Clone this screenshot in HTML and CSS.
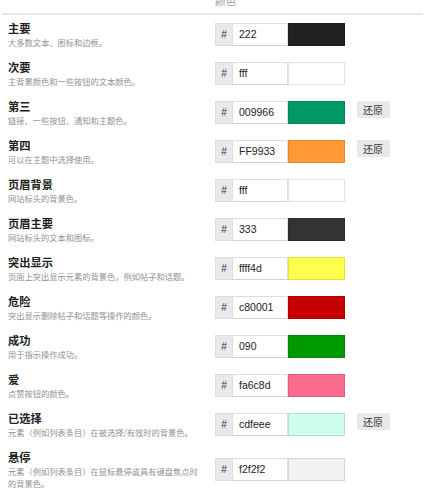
FILE: index.html
```html
<!DOCTYPE html>
<html lang="zh-CN">
<head>
<meta charset="utf-8">
<link rel="stylesheet" href="styles.css">
</head>
<body>
<div class="page">
  <div class="head"><span class="head-label">颜色</span></div>
  <div class="rows">
    <div class="row">
      <div class="info"><div class="name">主要</div><div class="desc">大多数文本、图标和边框。</div></div>
      <div class="ctrl"><span class="hash">#</span><span class="hex">222</span><span class="swatch" style="background:#222222"></span></div>
    </div>
    <div class="row">
      <div class="info"><div class="name">次要</div><div class="desc">主背景颜色和一些按钮的文本颜色。</div></div>
      <div class="ctrl"><span class="hash">#</span><span class="hex">fff</span><span class="swatch" style="background:#ffffff"></span></div>
    </div>
    <div class="row">
      <div class="info"><div class="name">第三</div><div class="desc">链接、一些按钮、通知和主题色。</div></div>
      <div class="ctrl"><span class="hash">#</span><span class="hex">009966</span><span class="swatch" style="background:#009966"></span><button class="revert">还原</button></div>
    </div>
    <div class="row">
      <div class="info"><div class="name">第四</div><div class="desc">可以在主题中选择使用。</div></div>
      <div class="ctrl"><span class="hash">#</span><span class="hex">FF9933</span><span class="swatch" style="background:#FF9933"></span><button class="revert">还原</button></div>
    </div>
    <div class="row">
      <div class="info"><div class="name">页眉背景</div><div class="desc">网站标头的背景色。</div></div>
      <div class="ctrl"><span class="hash">#</span><span class="hex">fff</span><span class="swatch" style="background:#ffffff"></span></div>
    </div>
    <div class="row">
      <div class="info"><div class="name">页眉主要</div><div class="desc">网站标头的文本和图标。</div></div>
      <div class="ctrl"><span class="hash">#</span><span class="hex">333</span><span class="swatch" style="background:#333333"></span></div>
    </div>
    <div class="row">
      <div class="info"><div class="name">突出显示</div><div class="desc">页面上突出显示元素的背景色，例如帖子和话题。</div></div>
      <div class="ctrl"><span class="hash">#</span><span class="hex">ffff4d</span><span class="swatch" style="background:#ffff4d"></span></div>
    </div>
    <div class="row">
      <div class="info"><div class="name">危险</div><div class="desc">突出显示删除帖子和话题等操作的颜色。</div></div>
      <div class="ctrl"><span class="hash">#</span><span class="hex">c80001</span><span class="swatch" style="background:#c80001"></span></div>
    </div>
    <div class="row">
      <div class="info"><div class="name">成功</div><div class="desc">用于指示操作成功。</div></div>
      <div class="ctrl"><span class="hash">#</span><span class="hex">090</span><span class="swatch" style="background:#009900"></span></div>
    </div>
    <div class="row">
      <div class="info"><div class="name">爱</div><div class="desc">点赞按钮的颜色。</div></div>
      <div class="ctrl"><span class="hash">#</span><span class="hex">fa6c8d</span><span class="swatch" style="background:#fa6c8d"></span></div>
    </div>
    <div class="row">
      <div class="info"><div class="name">已选择</div><div class="desc">元素（例如列表条目）在被选择/有效时的背景色。</div></div>
      <div class="ctrl"><span class="hash">#</span><span class="hex">cdfeee</span><span class="swatch" style="background:#cdfeee"></span><button class="revert">还原</button></div>
    </div>
    <div class="row">
      <div class="info"><div class="name">悬停</div><div class="desc">元素（例如列表条目）在鼠标悬停或具有键盘焦点时的背景色。</div></div>
      <div class="ctrl"><span class="hash">#</span><span class="hex">f2f2f2</span><span class="swatch" style="background:#f2f2f2"></span></div>
    </div>
  </div>
</div>
</body>
</html>
```

FILE: styles.css
```css
html, body {
  margin: 0;
  padding: 0;
  background: #ffffff;
}

body {
  font-family: "Noto Sans CJK SC", "Noto Sans", sans-serif;
  color: #222222;
}

.page {
  width: 425px;
}

.head {
  height: 7px;
  padding: 0 0 6px 213px;
  margin: 0 2px;
  border-bottom: 2px solid #e9e9e9;
  display: flex;
  align-items: flex-end;
}

.head-label {
  font-size: 10.5px;
  line-height: 13px;
  color: #9a9a9a;
  white-space: nowrap;
}

.rows {
  display: flex;
  flex-direction: column;
}

.row {
  display: flex;
  align-items: center;
  padding: 5.85px 0;
}

.info {
  width: 190px;
  padding-left: 8px;
  box-sizing: content-box;
  margin-right: 17px;
}

.name {
  font-size: 11.25px;
  line-height: 14px;
  font-weight: 700;
  color: #222222;
}

.desc {
  margin-top: 1.3px;
  font-size: 8.25px;
  line-height: 12px;
  color: #919191;
}

.ctrl {
  display: flex;
  align-items: flex-start;
}

.hash {
  box-sizing: border-box;
  width: 17px;
  height: 23px;
  background: #e9e9e9;
  border: 1px solid #dddddd;
  border-right: none;
  font-family: "Liberation Sans", Arial, sans-serif;
  font-size: 10px;
  line-height: 21px;
  text-align: center;
  color: #333333;
}

.hex {
  box-sizing: border-box;
  width: 56px;
  height: 23px;
  border: 1px solid #dddddd;
  border-bottom-color: #d3d3d3;
  background: #ffffff;
  padding-left: 6px;
  font-family: "Liberation Sans", Arial, sans-serif;
  font-size: 10.5px;
  line-height: 21px;
  color: #222222;
}

.swatch {
  box-sizing: border-box;
  width: 56.5px;
  height: 23px;
  border: 1px solid rgba(0, 0, 0, 0.12);
}

.revert {
  margin-left: 12px;
  height: 17px;
  width: 33px;
  padding: 0;
  border: none;
  background: #e9e9e9;
  color: #333333;
  font-family: "Noto Sans CJK SC", sans-serif;
  font-size: 10px;
  line-height: 17px;
}
```
